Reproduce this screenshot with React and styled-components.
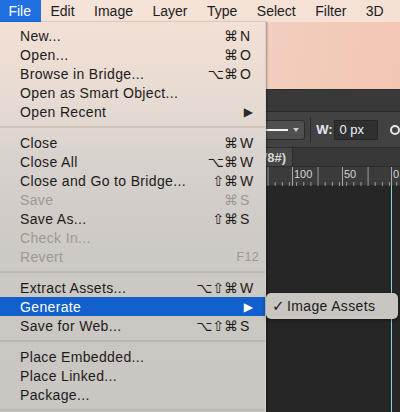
import React from 'react'
import styled, { createGlobalStyle } from 'styled-components'

const GlobalStyle = createGlobalStyle`
  html, body {
    margin: 0;
    padding: 0;
    background: #262626;
    overflow: hidden;
  }
  * { box-sizing: border-box; }
`

const MENU_FONT = `'Liberation Sans', 'DejaVu Sans', Arial, sans-serif`
const SYMBOL_FONT = `'DejaVu Sans', 'Liberation Sans', sans-serif`

const topMenus = ['File', 'Edit', 'Image', 'Layer', 'Type', 'Select', 'Filter', '3D']

const fileMenu = [
  [
    { label: 'New...', mods: '⌘', key: 'N' },
    { label: 'Open...', mods: '⌘', key: 'O' },
    { label: 'Browse in Bridge...', mods: '⌥⌘', key: 'O' },
    { label: 'Open as Smart Object...' },
    { label: 'Open Recent', submenu: true }
  ],
  [
    { label: 'Close', mods: '⌘', key: 'W' },
    { label: 'Close All', mods: '⌥⌘', key: 'W' },
    { label: 'Close and Go to Bridge...', mods: '⇧⌘', key: 'W' },
    { label: 'Save', mods: '⌘', key: 'S', disabled: true },
    { label: 'Save As...', mods: '⇧⌘', key: 'S' },
    { label: 'Check In...', disabled: true },
    { label: 'Revert', key: 'F12', disabled: true }
  ],
  [
    { label: 'Extract Assets...', mods: '⌥⇧⌘', key: 'W' },
    { label: 'Generate', submenu: true, active: true },
    { label: 'Save for Web...', mods: '⌥⇧⌘', key: 'S' }
  ],
  [
    { label: 'Place Embedded...' },
    { label: 'Place Linked...' },
    { label: 'Package...' }
  ]
]

function Ruler() {
  const ticks = []
  for (let i = 0; i < 24; i++) {
    const x = 2 + i * 7.15
    ticks.push(<line key={i} x1={x} x2={x} y1={i % 7 === 0 ? 0 : 15} y2={19} stroke="#9a9a9a" strokeWidth="1" />)
  }
  return (
    <RulerSvg width="134" height="19" viewBox="0 0 134 19">
      {ticks}
      <line x1="26.5" x2="26.5" y1="0" y2="19" stroke="#a8a8a8" />
      <line x1="76.5" x2="76.5" y1="0" y2="19" stroke="#a8a8a8" />
      <line x1="125.5" x2="125.5" y1="0" y2="19" stroke="#a8a8a8" />
      <text x="28" y="11" fill="#d4d4d4" fontSize="11" fontFamily="Liberation Sans, sans-serif">100</text>
      <text x="78" y="11" fill="#d4d4d4" fontSize="11" fontFamily="Liberation Sans, sans-serif">50</text>
      <text x="127" y="11" fill="#d4d4d4" fontSize="11" fontFamily="Liberation Sans, sans-serif">0</text>
    </RulerSvg>
  )
}

function MenuRow({ item }) {
  return (
    <Row $active={item.active} $disabled={item.disabled}>
      <RowLabel>{item.label}</RowLabel>
      {item.submenu ? (
        <Arrow $active={item.active}>▶</Arrow>
      ) : item.key ? (
        <Shortcut>
          {item.mods && <Mods>{item.mods}</Mods>}
          <Key $small={item.key.length > 1}>{item.key}</Key>
        </Shortcut>
      ) : null}
    </Row>
  )
}

export default function App() {
  return (
    <Screen>
      <GlobalStyle />
      <MenuBar>
        {topMenus.map((m, i) => (
          <TopItem key={m} $active={i === 0}>{m}</TopItem>
        ))}
      </MenuBar>

      <Workspace>
        <CanvasBackdrop />
        <AppBar />
        <OptionsBar>
          <StrokeSelect>
            <StrokeLine />
            <Caret />
          </StrokeSelect>
          <VDivider />
          <FieldLabel>W:</FieldLabel>
          <Field>0 px</Field>
          <LinkIcon>
            <svg width="10" height="12" viewBox="0 0 10 12">
              <circle cx="5" cy="6" r="4" fill="none" stroke="#e6e6e6" strokeWidth="2" />
            </svg>
          </LinkIcon>
        </OptionsBar>
        <TabBar>
          <DocTab>Untitled-1 @ 66.7% (RGB/8#)</DocTab>
        </TabBar>
        <RulerBar>
          <Ruler />
        </RulerBar>
        <Canvas>
          <Guide />
        </Canvas>

        <Dropdown>
          {fileMenu.map((group, gi) => (
            <React.Fragment key={gi}>
              {group.map((item) => (
                <MenuRow key={item.label} item={item} />
              ))}
              <Separator />
            </React.Fragment>
          ))}
        </Dropdown>

        <Submenu>
          <Check>✓</Check>
          <SubLabel>Image Assets</SubLabel>
        </Submenu>
      </Workspace>
    </Screen>
  )
}

const Screen = styled.div`
  width: 400px;
  height: 412px;
  display: flex;
  flex-direction: column;
  overflow: hidden;
  font-family: ${MENU_FONT};
  background: #262626;
`

const MenuBar = styled.div`
  height: 22px;
  display: flex;
  align-items: stretch;
  background: linear-gradient(90deg, #f5e4da 0%, #f5e2d7 60%, #f5e0d5 100%);
`

const TopItem = styled.div`
  display: flex;
  align-items: center;
  padding: 0 10.1px 0 8.4px;
  font-size: 14px;
  color: ${(p) => (p.$active ? '#ffffff' : '#1c1c1c')};
  background: ${(p) => (p.$active ? '#1f6fe0' : 'transparent')};
  & + & {
    margin-left: 1px;
  }
`

const Workspace = styled.div`
  position: relative;
  flex: 1;
  display: flex;
  flex-direction: column;
`

const CanvasBackdrop = styled.div`
  height: 67px;
  background: linear-gradient(100deg, #f3d9cc 0%, #f2cdbd 70%, #f3c6b2 100%);
`

const AppBar = styled.div`
  height: 23px;
  background: #393939;
  border-top: 1px solid #2e2e2e;
  border-bottom: 1px solid #2c2c2c;
`

const OptionsBar = styled.div`
  height: 36px;
  display: flex;
  align-items: center;
  padding-left: 200px;
  background: #424242;
  border-bottom: 1px solid #2e2e2e;
  color: #e8e8e8;
  font-size: 13px;
`

const StrokeSelect = styled.div`
  width: 109px;
  height: 20px;
  display: flex;
  align-items: center;
  padding: 0 5px 0 4px;
  background: #505050;
  border: 1px solid #2c2c2c;
  border-radius: 3px;
`

const StrokeLine = styled.div`
  flex: 1;
  height: 2px;
  background: #f4f4f4;
  margin-right: 5px;
`

const Caret = styled.div`
  width: 0;
  height: 0;
  border-left: 3px solid transparent;
  border-right: 3px solid transparent;
  border-top: 4px solid #c8c8c8;
`

const VDivider = styled.div`
  width: 1px;
  height: 26px;
  background: #2c2c2c;
  margin: 0 5px 0 5px;
`

const FieldLabel = styled.span`
  font-weight: bold;
  font-size: 13px;
  color: #e2e6ee;
  width: 18px;
`

const Field = styled.div`
  width: 46px;
  height: 20px;
  display: flex;
  align-items: center;
  padding-left: 5px;
  background: #303030;
  border: 1px solid #262626;
  font-size: 13px;
  color: #eef2ff;
`

const LinkIcon = styled.div`
  margin-left: 12px;
  display: flex;
  align-items: center;
`

const TabBar = styled.div`
  height: 19px;
  display: flex;
  background: #383838;
  border-bottom: 1px solid #2c2c2c;
`

const DocTab = styled.div`
  width: 293px;
  display: flex;
  align-items: center;
  justify-content: flex-end;
  padding-right: 6px;
  background: #474747;
  border-right: 1px solid #2c2c2c;
  color: #d8d8d8;
  font-weight: bold;
  font-size: 13px;
  white-space: nowrap;
  overflow: hidden;
`

const RulerBar = styled.div`
  height: 19px;
  display: flex;
  justify-content: flex-end;
  background: #3b3b3b;
  border-bottom: 1px solid #2a2a2a;
`

const RulerSvg = styled.svg`
  display: block;
`

const Canvas = styled.div`
  flex: 1;
  position: relative;
  background: #262626;
`

const Guide = styled.div`
  position: absolute;
  left: 391px;
  top: 0;
  bottom: 0;
  width: 1px;
  background: #7fd9e2;
`

const Dropdown = styled.div`
  position: absolute;
  top: 0;
  left: 0;
  width: 266px;
  bottom: -10px;
  padding-top: 4px;
  display: flex;
  flex-direction: column;
  background: linear-gradient(
    180deg,
    #f3e0d5 0px,
    #eadcd3 60px,
    #e3d9d2 95px,
    #d9d3ce 130px,
    #d0cbc6 200px,
    #cbc7c2 280px,
    #cac6c1 400px
  );
  border-right: 1px solid #d6d1cc;
  box-shadow: 1px 0 2px rgba(0, 0, 0, 0.35);
`

const Row = styled.div`
  height: 19px;
  flex-shrink: 0;
  display: flex;
  align-items: center;
  padding: 0 6px 0 20px;
  font-size: 14px;
  background: ${(p) => (p.$active ? '#1160cc' : 'transparent')};
  color: ${(p) => (p.$active ? '#ffffff' : p.$disabled ? '#9c9996' : '#1b1b1b')};
`

const RowLabel = styled.span`
  flex: 1;
  white-space: nowrap;
  letter-spacing: 0.35px;
`

const Shortcut = styled.span`
  display: flex;
  align-items: center;
`

const Mods = styled.span`
  font-family: ${SYMBOL_FONT};
  font-size: 14px;
  line-height: 1;
  margin-right: 2px;
`

const Key = styled.span`
  min-width: 19px;
  font-size: ${(p) => (p.$small ? '12.5px' : '14px')};
  letter-spacing: 0.3px;
`

const Arrow = styled.span`
  font-family: ${SYMBOL_FONT};
  font-size: 12px;
  margin-right: 6px;
  color: ${(p) => (p.$active ? '#ffffff' : '#2a2a2a')};
`

const Separator = styled.div`
  height: 12px;
  flex-shrink: 0;
  display: flex;
  align-items: center;
  &::after {
    content: '';
    flex: 1;
    height: 2px;
    background: rgba(120, 105, 95, 0.16);
  }
`

const Submenu = styled.div`
  position: absolute;
  left: 266px;
  top: 271px;
  width: 132px;
  height: 26px;
  display: flex;
  align-items: center;
  padding-left: 6px;
  background: #c9c5c0;
  border-radius: 5px;
  box-shadow: 0 1px 4px rgba(0, 0, 0, 0.45);
  font-size: 14px;
  color: #1b1b1b;
  white-space: nowrap;
`

const Check = styled.span`
  font-family: ${SYMBOL_FONT};
  font-size: 15px;
  font-weight: bold;
  width: 15px;
`

const SubLabel = styled.span`
  letter-spacing: 0.35px;
`
